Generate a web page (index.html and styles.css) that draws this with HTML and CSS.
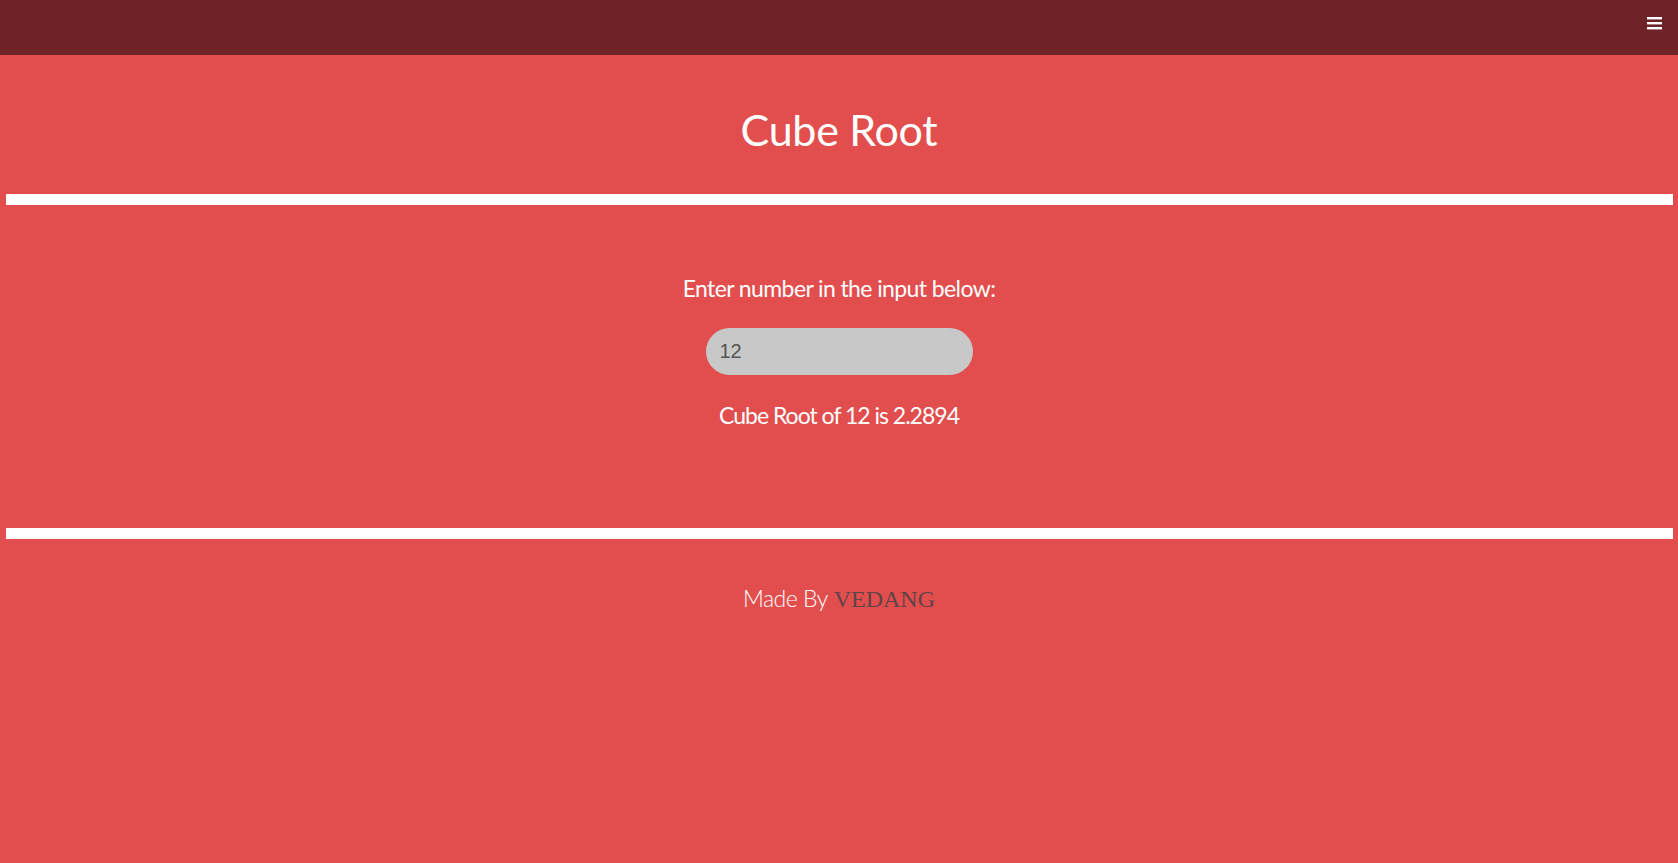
FILE: index.html
```html
<!DOCTYPE html>
<html>
<head>
<meta charset="utf-8">
<title>Cube Root</title>
<link rel="stylesheet" href="styles.css">
</head>
<body>
<nav class="topbar">
  <svg class="menu-icon" width="15" height="14" viewBox="0 0 15 14">
    <rect x="0" y="1" width="15" height="2.4" fill="#fff"/>
    <rect x="0" y="6" width="15" height="2.4" fill="#fff"/>
    <rect x="0" y="11" width="15" height="2.4" fill="#fff"/>
  </svg>
</nav>
<header class="hero">
  <h1 class="title">Cube Root</h1>
</header>
<div class="divider"></div>
<main class="calc">
  <p class="prompt">Enter number in the input below:</p>
  <input class="num-input" type="text" value="12">
  <p class="result">Cube Root of 12 is 2.2894</p>
</main>
<div class="divider"></div>
<footer class="footer">
  <span class="made">Made By</span> <span class="author">VEDANG</span>
</footer>
</body>
</html>
```
FILE: styles.css
```css
html, body {
  margin: 0;
  padding: 0;
}
body {
  background: #e24e4e;
  font-family: Lato, "Open Sans", sans-serif;
  color: #fff;
  min-height: 863px;
}
.topbar {
  height: 55px;
  background: #6e2426;
  display: flex;
  justify-content: flex-end;
  align-items: flex-start;
  padding: 16px 16px 0 0;
  box-sizing: border-box;
}
.menu-icon {
  display: block;
}
.hero {
  padding: 50px 0 39px;
  text-align: center;
}
.title {
  margin: 0;
  font-size: 43px;
  line-height: 50px;
  font-weight: 400;
  letter-spacing: -0.3px;
}
.divider {
  height: 11px;
  background: #fff;
  margin: 0 5px 0 6px;
}
.calc {
  padding: 70px 0 99px;
  display: flex;
  flex-direction: column;
  align-items: center;
}
.prompt {
  margin: 0;
  font-size: 23px;
  line-height: 26px;
  letter-spacing: -0.6px;
}
.num-input {
  margin-top: 27px;
  width: 267px;
  height: 47px;
  box-sizing: border-box;
  border: none;
  border-radius: 24px;
  background: #c8c8c8;
  padding: 0 14px;
  font-family: "Liberation Sans", Arial, sans-serif;
  font-size: 20px;
  color: #555;
  outline: none;
}
.result {
  margin: 26px 0 0;
  font-size: 23px;
  line-height: 28px;
  letter-spacing: -1px;
}
.footer {
  padding-top: 45px;
  text-align: center;
  font-size: 23px;
  line-height: 28px;
}
.made {
  font-weight: 300;
  letter-spacing: -0.5px;
}
.author {
  font-family: "Liberation Serif", "Times New Roman", serif;
  font-size: 24px;
  color: #5e4446;
}
```
